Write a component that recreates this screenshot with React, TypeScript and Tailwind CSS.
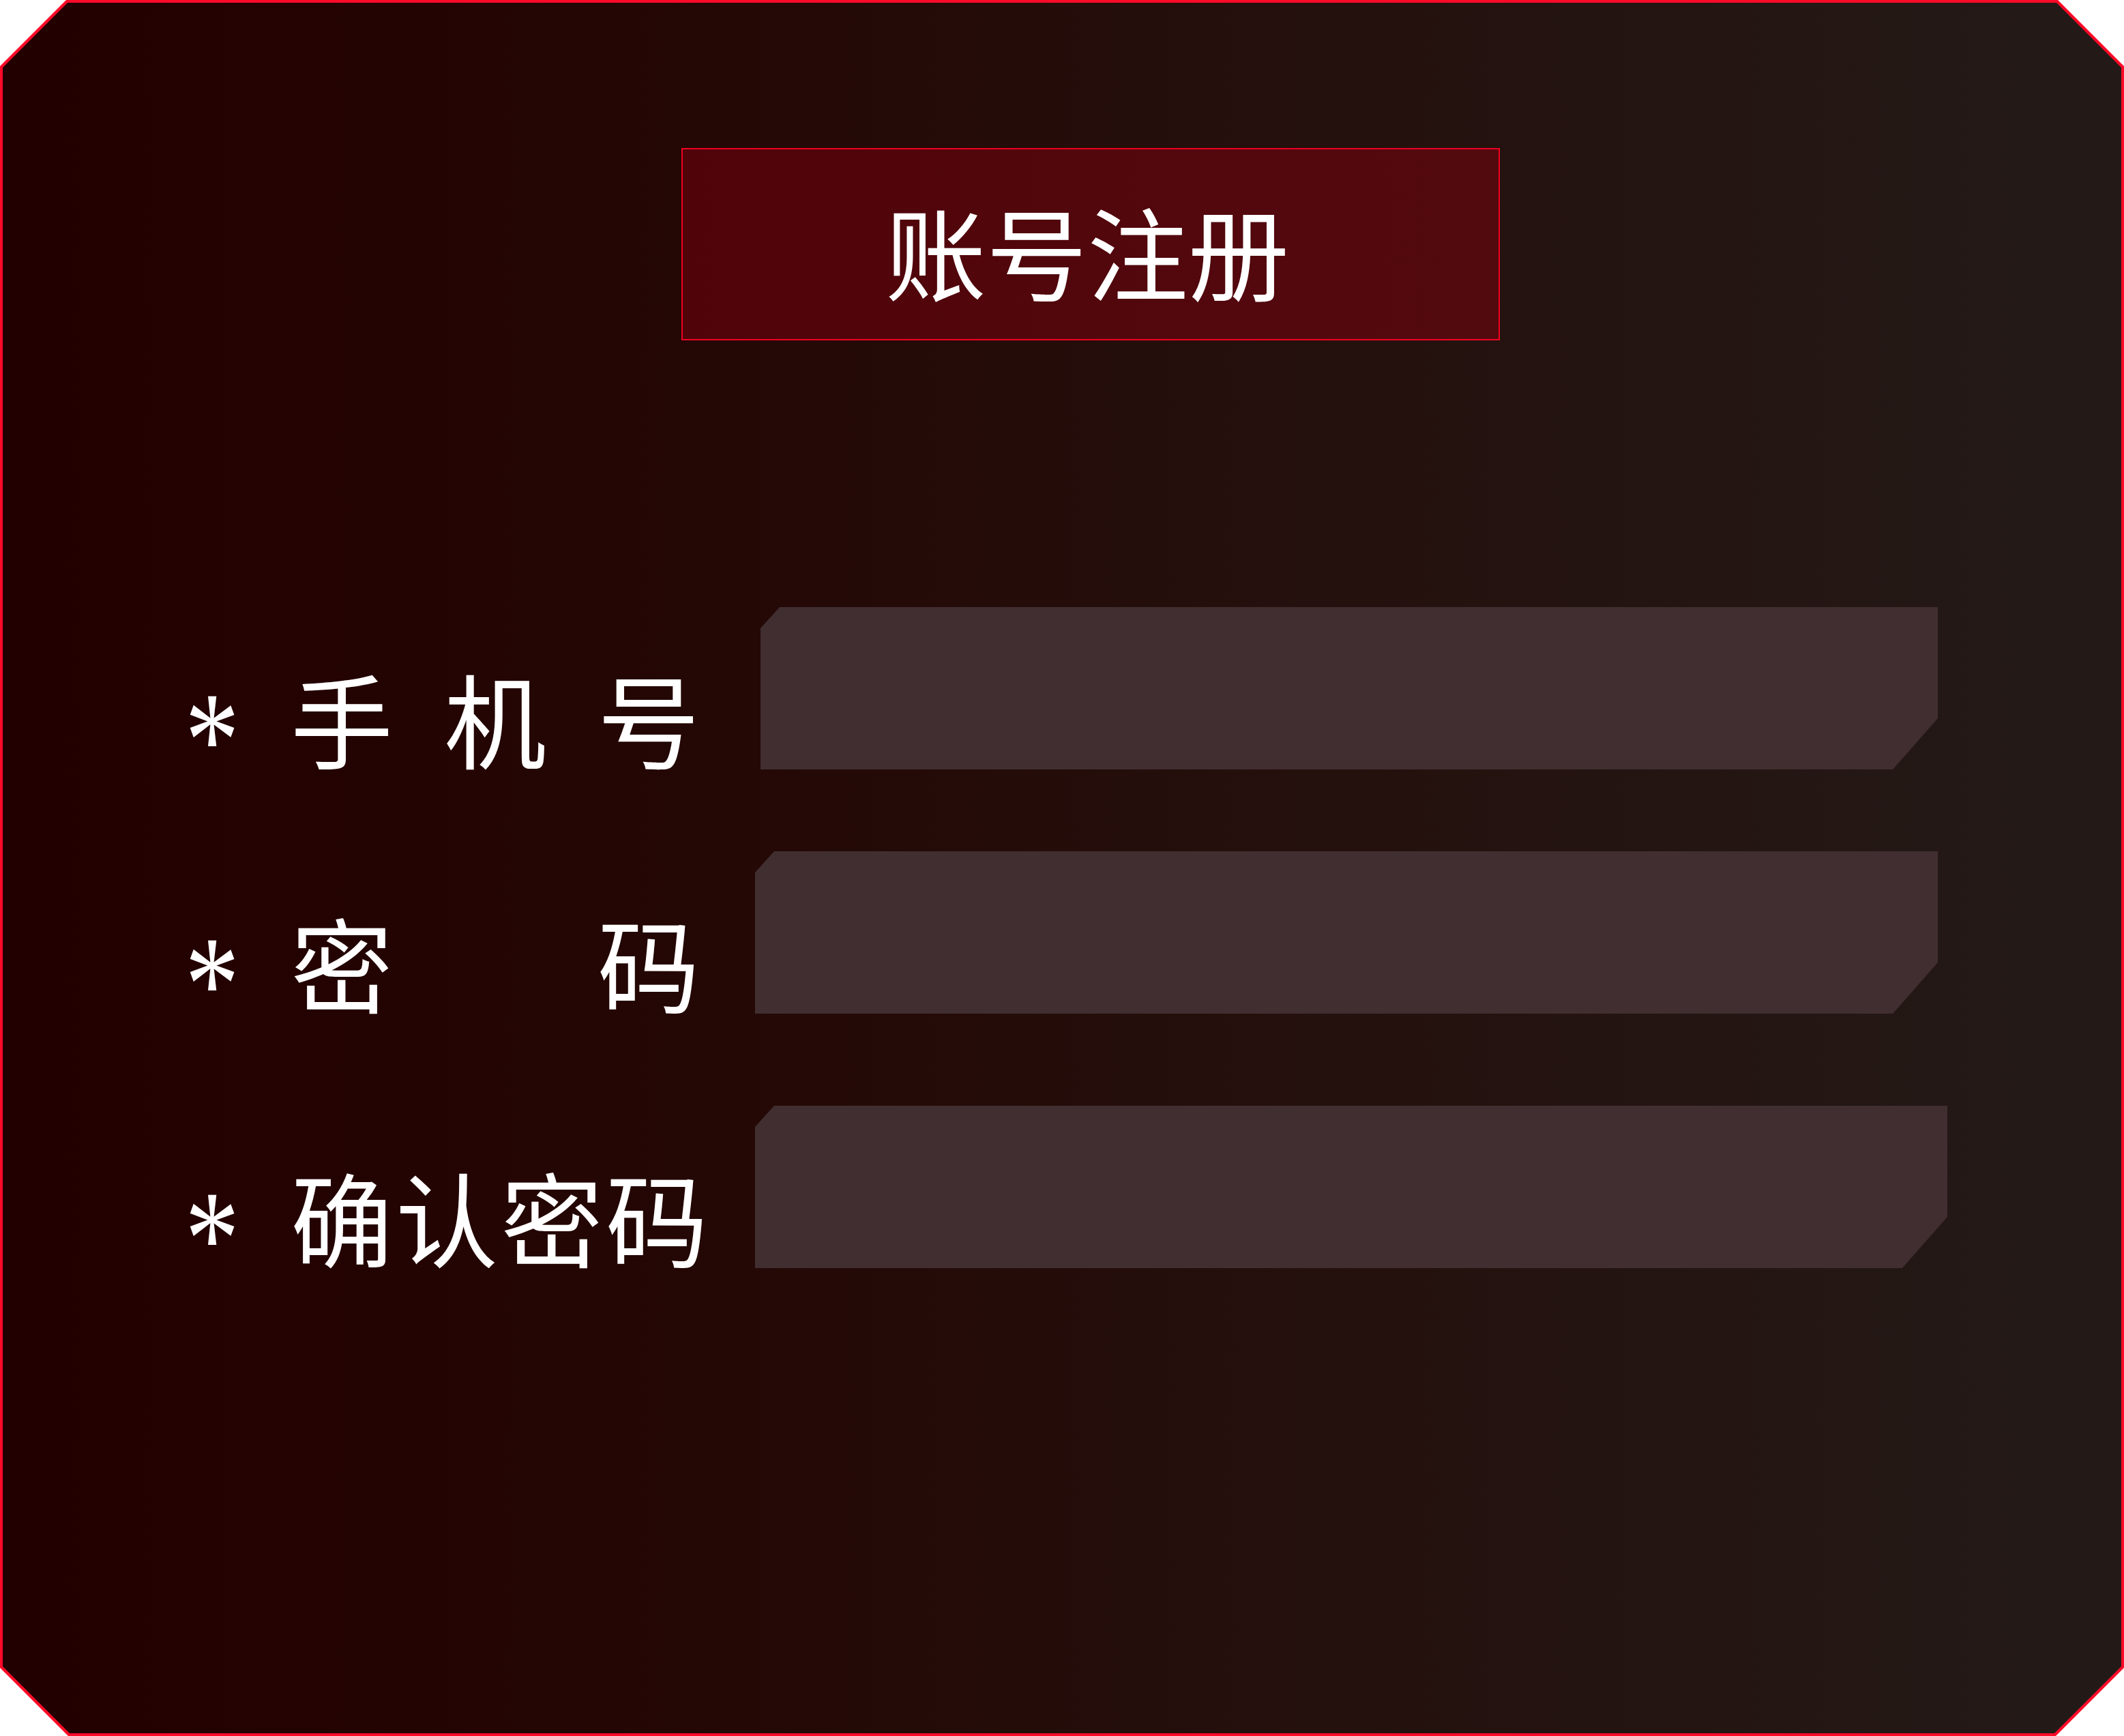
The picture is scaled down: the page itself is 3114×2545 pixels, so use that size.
import React from 'react';

const cjk = "font-['Noto_Sans_CJK_SC','Noto_Sans',sans-serif]";

interface Field {
  label: string[];
  labelWidth: string;
  boxLeft: string;
  boxWidth: string;
  gapTop: string;
}

const fields: Field[] = [
  { label: ['手', '机', '号'], labelWidth: 'w-[600px]', boxLeft: 'ml-[89px]', boxWidth: 'w-[1726px]', gapTop: 'mt-0' },
  { label: ['密', '码'], labelWidth: 'w-[600px]', boxLeft: 'ml-[81px]', boxWidth: 'w-[1734px]', gapTop: 'mt-[120px]' },
  { label: ['确', '认', '密', '码'], labelWidth: 'w-[612px]', boxLeft: 'ml-[69px]', boxWidth: 'w-[1748px]', gapTop: 'mt-[135px]' },
];

function InputBox({ width, left }: { width: string; left: string }) {
  return (
    <div
      className={`${width} ${left} h-[238px] shrink-0 bg-[#412e30] [clip-path:polygon(28px_0,100%_0,100%_calc(100%_-_75px),calc(100%_-_66px)_100%,0_100%,0_31px)]`}
    />
  );
}

function FieldRow({ field }: { field: Field }) {
  return (
    <div className={`flex items-start ${field.gapTop}`}>
      <div className="mt-[86px] flex h-[150px] items-center">
        <span className="w-[148px] shrink-0 origin-left -translate-x-[7px] translate-y-[33px] scale-x-[0.8] font-['Liberation_Serif',serif] text-[200px] leading-none text-white">
          *
        </span>
        <div className={`flex ${field.labelWidth} justify-between ${cjk} text-[150px] leading-none text-white`}>
          {field.label.map((ch, i) => (
            <span key={i}>{ch}</span>
          ))}
        </div>
      </div>
      <InputBox width={field.boxWidth} left={field.boxLeft} />
    </div>
  );
}

export default function App() {
  return (
    <div className="h-[2545px] w-[3114px] bg-[#ff0a28] p-[4px] [clip-path:polygon(97px_0,calc(100%_-_97px)_0,100%_97px,100%_calc(100%_-_100px),calc(100%_-_100px)_100%,100px_100%,0_calc(100%_-_100px),0_97px)]">
      <div className="flex h-full w-full flex-col bg-gradient-to-r from-[#230000] to-[#231a18] [clip-path:polygon(95px_0,calc(100%_-_95px)_0,100%_95px,100%_calc(100%_-_98px),calc(100%_-_98px)_100%,98px_100%,0_calc(100%_-_98px),0_95px)]">
        <div className="ml-[995px] mt-[213px] flex h-[282px] w-[1200px] items-center justify-center border-2 border-[#f00020] bg-gradient-to-r from-[#50040a] to-[#530a0f] pt-[16px] pr-[10px]">
          <span className={`${cjk} text-[148px] leading-none text-white`}>账号注册</span>
        </div>
        <div className="mt-[391px] pl-[274px]">
          {fields.map((f, i) => (
            <FieldRow key={i} field={f} />
          ))}
        </div>
      </div>
    </div>
  );
}
